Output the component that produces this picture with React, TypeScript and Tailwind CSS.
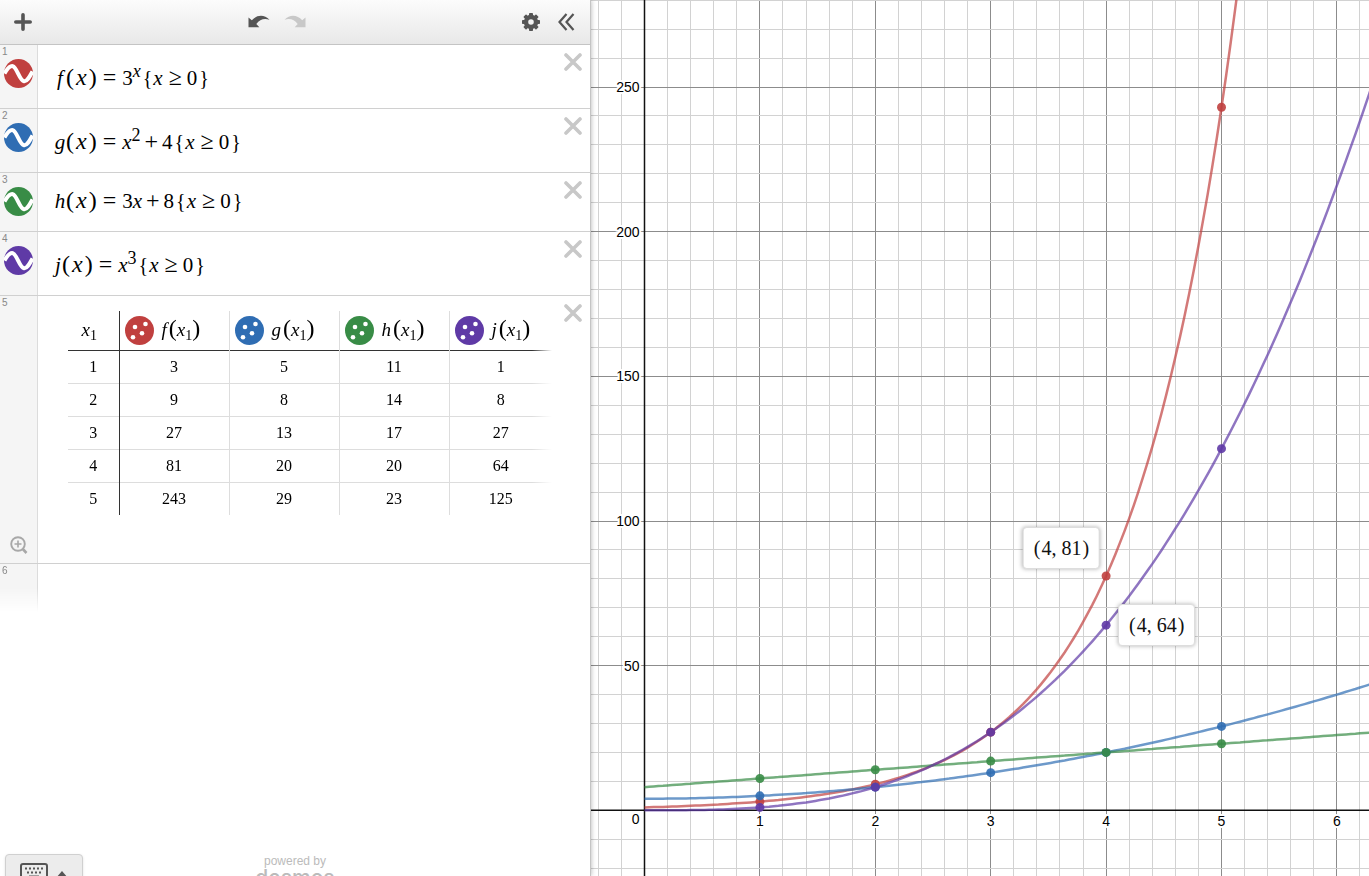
import React from "react"

type Hue = "red" | "blue" | "green" | "purple"

// Curve and icon colors
const colors: Record<Hue, string> = {
	red: "#c0403f",
	blue: "#2f6db3",
	green: "#388c46",
	purple: "#5f3aa6",
}

// Graph viewport, in pixels from the top left of the graph paper
const originX = 53.5
const originY = 810.3
const unitX = 115.4
const unitY = 2.893
const maxX = 12

const toX = (x: number) => originX + x * unitX
const toY = (y: number) => originY - y * unitY

interface Curve {
	hue: Hue
	fn: (x: number) => number
}

const curves: Curve[] = [
	{ hue: "red", fn: (x) => 3 ** x },
	{ hue: "blue", fn: (x) => x * x + 4 },
	{ hue: "green", fn: (x) => 3 * x + 8 },
	{ hue: "purple", fn: (x) => x ** 3 },
]

const xs = [1, 2, 3, 4, 5]

function range(from: number, to: number) {
	return Array.from({ length: to - from + 1 }, (_, i) => from + i)
}

function curvePath(fn: (x: number) => number) {
	const points: string[] = []
	for (let x = 0; x <= maxX; x += 0.04) {
		const y = fn(x)
		points.push(`${toX(x).toFixed(1)},${toY(y).toFixed(1)}`)
		if (y > 400) break
	}
	return "M" + points.join("L")
}

/* ---------- Math pieces ---------- */

function Call({ name }: { name: string }) {
	return (
		<>
			<i
				className={`inline-block text-center ${name === "j" ? "w-2" : "w-3"}`}
			>
				{name}
			</i>
			<span className="text-2xl leading-none">(</span>
			<i className="px-0.5 text-2xl leading-none">x</i>
			<span className="text-2xl leading-none">)</span>
			<span className="px-1.5 text-2xl leading-none">=</span>
		</>
	)
}

function Sup({ children }: { children: React.ReactNode }) {
	return <sup className="-top-2 text-lg leading-none">{children}</sup>
}

function Plus() {
	return <span className="px-1 text-2xl leading-none">+</span>
}

function Domain() {
	return (
		<>
			<span className="pl-0.5 text-xl leading-none">{"{"}</span>
			<i className="px-px">x</i>
			<span className="px-[5px] text-2xl leading-none">≥</span>
			<span>0</span>
			<span className="pl-0.5 text-xl leading-none">{"}"}</span>
		</>
	)
}

/* ---------- Icons ---------- */

function CurveIcon({ hue }: { hue: Hue }) {
	return (
		<svg width="29" height="29" viewBox="0 0 29 29" aria-hidden="true">
			<circle cx="14.5" cy="14.5" r="14.5" fill={colors[hue]} />
			<path
				d="M0.5 14.5C3.5 9.5 6 6.5 8.7 7.2C13 8.5 15.5 21.5 20 22.3C23 22.8 25.5 18 28.5 12.5"
				fill="none"
				stroke="#fff"
				strokeWidth="4"
			/>
		</svg>
	)
}

function DotsIcon({ hue }: { hue: Hue }) {
	return (
		<svg width="29" height="29" viewBox="0 0 29 29" aria-hidden="true">
			<circle cx="14.5" cy="14.5" r="14.5" fill={colors[hue]} />
			<g fill="#fff">
				<circle cx="20.5" cy="8" r="2.3" />
				<circle cx="10" cy="11" r="2.3" />
				<circle cx="17" cy="17.3" r="2.3" />
				<circle cx="8" cy="21.2" r="2.3" />
			</g>
		</svg>
	)
}

function CloseButton({ label }: { label: string }) {
	return (
		<button
			type="button"
			aria-label={label}
			className="mt-2 mr-2 shrink-0 self-start"
		>
			<svg width="18" height="18" viewBox="0 0 18 18">
				<path
					d="M2 2L16 16M16 2L2 16"
					stroke="#c8c8c8"
					strokeWidth="3.6"
					strokeLinecap="round"
				/>
			</svg>
		</button>
	)
}

function ArrowIcon({ flip }: { flip?: boolean }) {
	return (
		<svg
			width="22"
			height="14"
			viewBox="0 0 22 14"
			className={flip ? "-scale-x-100" : ""}
			fill="currentColor"
		>
			<path d="M0.5 2.5L3.8 5.3C8.5 0 16 -1 21.5 4.8C16 3 11.8 4.5 8.3 9L11.3 12.2H0.5Z" />
		</svg>
	)
}

function GearIcon() {
	return (
		<svg width="18" height="18" viewBox="0 0 18 18" fill="none">
			<circle cx="9" cy="9" r="5" stroke="#555" strokeWidth="4.4" />
			<g fill="#555">
				{range(0, 7).map((i) => (
					<rect
						key={i}
						x="7"
						y="0"
						width="4"
						height="4"
						rx="0.8"
						transform={`rotate(${i * 45} 9 9)`}
					/>
				))}
			</g>
		</svg>
	)
}

/* ---------- Left panel ---------- */

function Toolbar() {
	return (
		<header className="flex h-[45px] shrink-0 items-center border-b border-[#c4c4c4] bg-linear-to-b from-[#fcfcfc] to-[#e8e8e8] px-3.5 text-[#555]">
			<div className="flex flex-1">
				<button type="button" aria-label="Add item">
					<svg width="18" height="18" viewBox="0 0 18 18">
						<path
							d="M9 1.8V16.2M1.8 9H16.2"
							stroke="currentColor"
							strokeWidth="3.6"
							strokeLinecap="round"
						/>
					</svg>
				</button>
			</div>
			<div className="flex gap-3.5 pr-9">
				<button type="button" aria-label="Undo">
					<ArrowIcon />
				</button>
				<button type="button" aria-label="Redo" className="text-[#c8c8c8]">
					<ArrowIcon flip />
				</button>
			</div>
			<div className="flex flex-1 justify-end gap-[18px]">
				<button type="button" aria-label="Graph settings">
					<GearIcon />
				</button>
				<button type="button" aria-label="Hide expression list">
					<svg width="18" height="18" viewBox="0 0 18 18" fill="none">
						<path
							d="M8.5 1L1.5 9L8.5 17M15.5 1L8.5 9L15.5 17"
							stroke="#555"
							strokeWidth="2.2"
						/>
					</svg>
				</button>
			</div>
		</header>
	)
}

interface RowProps {
	index: number
	hue: Hue
	short?: boolean // Rows without an exponent are a little lower
	children: React.ReactNode
}

function Gutter({
	index,
	children,
}: {
	index: number
	children?: React.ReactNode
}) {
	return (
		<div className="flex w-[38px] shrink-0 flex-col border-r border-[#dcdcdc] bg-[#f5f5f5]">
			<span className="h-3.5 pl-0.5 text-[10px] leading-3.5 text-[#888]">
				{index}
			</span>
			{children}
		</div>
	)
}

function ExpressionRow({ index, hue, short, children }: RowProps) {
	return (
		<li className="flex border-b border-[#d0d0d0]">
			<Gutter index={index}>
				<button
					type="button"
					aria-label={`Hide curve ${index}`}
					className="ml-1 self-start"
				>
					<CurveIcon hue={hue} />
				</button>
			</Gutter>
			<div
				className={`flex-1 pb-3.5 pl-4 font-['Liberation_Serif',serif] text-[21px] leading-8 whitespace-nowrap ${
					short ? "pt-3" : "pt-[17px]"
				}`}
			>
				{children}
			</div>
			<CloseButton label={`Delete expression ${index}`} />
		</li>
	)
}

const columns: { name: string; hue: Hue }[] = [
	{ name: "f", hue: "red" },
	{ name: "g", hue: "blue" },
	{ name: "h", hue: "green" },
	{ name: "j", hue: "purple" },
]

function ValueTable() {
	return (
		<table className="mt-[15px] ml-[30px] w-[484px] table-fixed border-collapse text-center font-['Liberation_Serif',serif] text-base [mask-image:linear-gradient(to_right,black_calc(100%-20px),transparent)]">
			<thead>
				<tr className="h-[39px] border-b border-[#333]">
					<th className="w-[51px] border-r border-[#333] p-0 pr-2 text-[19px] font-normal">
						<i>x</i>
						<sub className="text-sm">1</sub>
					</th>
					{columns.map((c, i) => (
						<th
							key={c.name}
							className={`p-0 font-normal ${
								i < 3 ? "w-[110px] border-r border-[#ddd]" : ""
							}`}
						>
							<span className="flex items-center gap-1.5 pl-[5px] text-[19px]">
								<DotsIcon hue={c.hue} />
								<span className="whitespace-nowrap">
									<i className="px-0.5">{c.name}</i>
									<span className="text-2xl leading-none">(</span>
									<i>x</i>
									<sub className="text-sm">1</sub>
									<span className="text-2xl leading-none">)</span>
								</span>
							</span>
						</th>
					))}
				</tr>
			</thead>
			<tbody>
				{xs.map((x) => (
					<tr key={x} className="h-[33px] border-b border-[#ddd] last:border-b-0">
						<td className="border-r border-[#333] p-0">{x}</td>
						{curves.map((c) => (
							<td
								key={c.hue}
								className="border-r border-[#ddd] p-0 last:border-r-0"
							>
								{c.fn(x)}
							</td>
						))}
					</tr>
				))}
			</tbody>
		</table>
	)
}

function ExpressionPanel() {
	return (
		<aside className="relative z-10 flex w-[591px] shrink-0 flex-col overflow-hidden border-r border-[#c4c4c4] bg-white shadow-[0_0_5px_rgba(0,0,0,0.3)]">
			<Toolbar />
			<ol className="font-['Liberation_Sans',sans-serif]">
				<ExpressionRow index={1} hue="red">
					<Call name="f" />3<Sup><i>x</i></Sup>
					<Domain />
				</ExpressionRow>
				<ExpressionRow index={2} hue="blue">
					<Call name="g" />
					<i>x</i>
					<Sup>2</Sup>
					<Plus />4
					<Domain />
				</ExpressionRow>
				<ExpressionRow index={3} hue="green" short>
					<Call name="h" />3<i>x</i>
					<Plus />8
					<Domain />
				</ExpressionRow>
				<ExpressionRow index={4} hue="purple">
					<Call name="j" />
					<i>x</i>
					<Sup>3</Sup>
					<Domain />
				</ExpressionRow>
				<li className="flex border-b border-[#d0d0d0]">
					<Gutter index={5}>
						<button
							type="button"
							aria-label="Zoom to fit"
							className="mt-auto mb-2 ml-2.5 self-start"
						>
							<svg width="18" height="19" viewBox="0 0 18 19" fill="none">
								<circle cx="8" cy="8" r="6.8" stroke="#a8a8a8" strokeWidth="1.9" />
								<path d="M4.5 8H11.5M8 4.5V11.5" stroke="#a8a8a8" strokeWidth="1.6" />
								<path d="M12.8 13L16.5 17" stroke="#a8a8a8" strokeWidth="2.6" />
							</svg>
						</button>
					</Gutter>
					<div className="flex-1 pb-12">
						<ValueTable />
					</div>
					<CloseButton label="Delete table" />
				</li>
				<li className="flex h-12 [mask-image:linear-gradient(black_50%,transparent)]">
					<Gutter index={6} />
				</li>
			</ol>

			<footer className="mt-auto flex h-[22px] items-start px-[5px] font-['Liberation_Sans',sans-serif]">
				<div className="flex-1">
					<button
						type="button"
						aria-label="Open keypad"
						className="flex h-12 w-[78px] items-start gap-2 rounded border border-[#d0d0d0] bg-[#ececec] pt-2 pl-3.5 shadow"
					>
						<svg width="28" height="20" viewBox="0 0 28 20" fill="none">
							<rect x="1" y="1" width="26" height="18" rx="2" stroke="#555" strokeWidth="2" />
							<path d="M5 5.5H24" stroke="#555" strokeWidth="2" strokeDasharray="2 2" />
							<path d="M7 9.5H22" stroke="#555" strokeWidth="2" strokeDasharray="2 2" />
							<path d="M9 13.5H19" stroke="#555" strokeWidth="2" />
						</svg>
						<svg width="12" height="7" viewBox="0 0 12 7" className="mt-2">
							<path d="M6 0L12 7H0Z" fill="#555" />
						</svg>
					</button>
				</div>
				<a href="#desmos" className="flex flex-col items-center text-[#bbb]">
					<span className="text-xs leading-3.5">powered by</span>
					<span className="font-[Inter,sans-serif] text-[21px] leading-5 font-medium">
						desmos
					</span>
				</a>
				<div className="flex-1" />
			</footer>
		</aside>
	)
}

/* ---------- Graph paper ---------- */

function PointLabel({ x, y, left }: { x: number; y: number; left?: boolean }) {
	return (
		<div
			className={`absolute -translate-y-1/2 rounded border border-[#ddd] bg-white px-2.5 py-1.5 font-['Liberation_Serif',serif] text-xl leading-7 whitespace-nowrap text-[#111] shadow-[0_0_4px_rgba(0,0,0,0.3)] ${
				left ? "-mt-7 -ml-1.5 -translate-x-full" : "ml-3"
			}`}
			style={{ left: toX(x), top: toY(y) }}
		>
			<span className="pr-px">(</span>
			{x}, {y}
			<span className="pl-px">)</span>
		</div>
	)
}

function Graph() {
	return (
		<main className="relative min-w-0 flex-1 overflow-hidden bg-white">
			<svg
				className="block h-full w-full font-['Liberation_Sans',sans-serif] text-sm"
				role="img"
				aria-label="Graph of f, g, h and j"
			>
				{/* Grid lines */}
				<g shapeRendering="crispEdges">
					{range(-2, 60).map((n) => (
						<line
							key={n}
							x1={toX(n / 5)}
							x2={toX(n / 5)}
							y1="0"
							y2="100%"
							stroke={n % 5 === 0 ? "#8c8c8c" : "#d2d2d2"}
						/>
					))}
					{range(-20, 28).map((n) => (
						<line
							key={n}
							x1="0"
							x2="100%"
							y1={toY(n * 10)}
							y2={toY(n * 10)}
							stroke={n % 5 === 0 ? "#8c8c8c" : "#d2d2d2"}
						/>
					))}
				</g>

				{/* Axes */}
				<path
					d={`M${originX} 0V2000M0 ${originY}H3000`}
					stroke="#111"
					strokeWidth="1.5"
				/>

				{/* Tick labels */}
				<g stroke="#fff" strokeWidth="4" paintOrder="stroke" strokeLinejoin="round">
					<text x={originX - 5} y={originY + 14} textAnchor="end">
						0
					</text>
					{range(1, 6).map((n) => (
						<text key={n} x={toX(n)} y={originY + 16} textAnchor="middle">
							{n}
						</text>
					))}
					{range(1, 5).map((n) => (
						<text key={n} x={originX - 5} y={toY(n * 50) + 5} textAnchor="end">
							{n * 50}
						</text>
					))}
				</g>

				{/* Curves */}
				{curves.map((c) => (
					<path
						key={c.hue}
						d={curvePath(c.fn)}
						fill="none"
						stroke={colors[c.hue]}
						strokeWidth="2.5"
						strokeOpacity="0.7"
					/>
				))}

				{/* Table points */}
				{[curves[0], curves[1], curves[3], curves[2]].map((c) =>
					xs.map((x) => (
						<circle
							key={c.hue + x}
							cx={toX(x)}
							cy={toY(c.fn(x))}
							r="4.5"
							fill={colors[c.hue]}
							fillOpacity="0.9"
						/>
					))
				)}
			</svg>
			<PointLabel x={4} y={81} left />
			<PointLabel x={4} y={64} />
		</main>
	)
}

export default function App() {
	return (
		<div className="flex h-screen overflow-hidden bg-white">
			<ExpressionPanel />
			<Graph />
		</div>
	)
}
